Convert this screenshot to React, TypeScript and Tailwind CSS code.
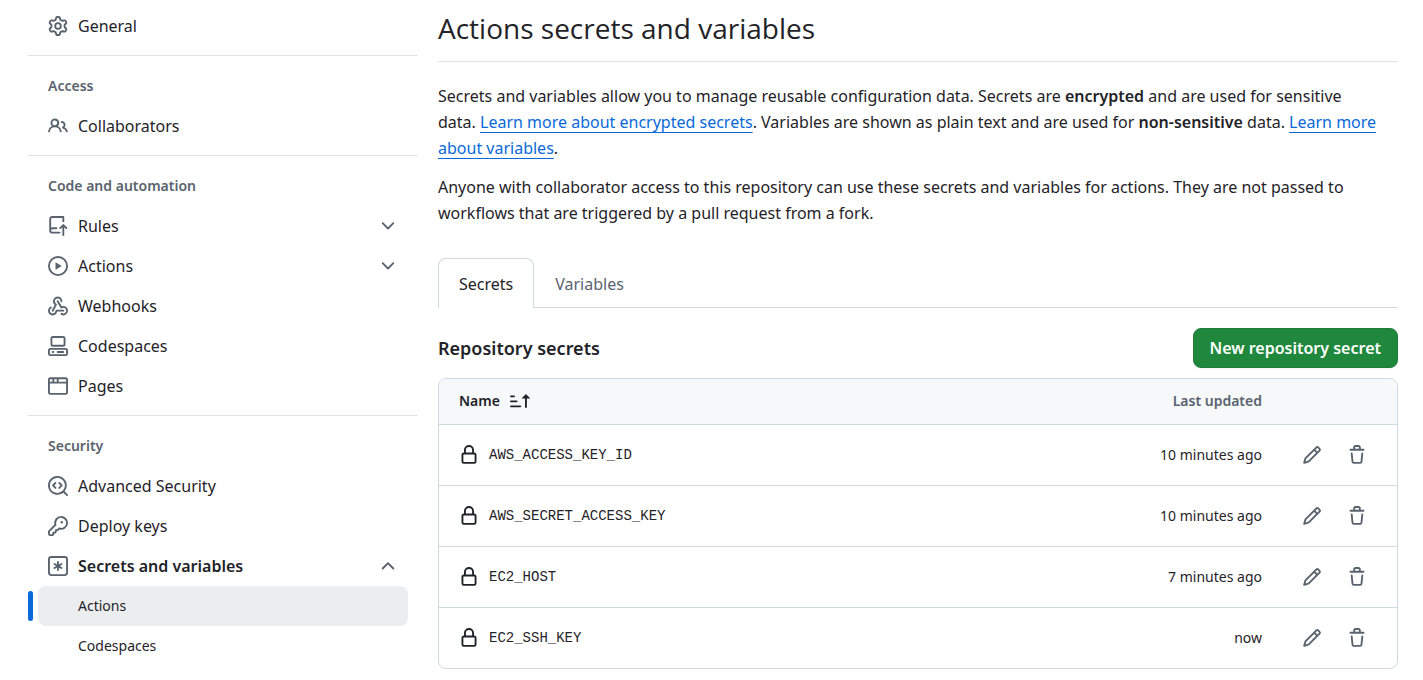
import React from "react";

const icons = {
  gear: [
    "M8 0a8.2 8.2 0 0 1 .701.031C9.444.095 9.99.645 10.16 1.29l.288 1.107c.018.066.079.158.212.224.231.114.454.243.668.386.123.082.233.09.299.071l1.103-.303c.644-.176 1.392.021 1.82.63.27.385.506.792.704 1.218.315.675.111 1.422-.364 1.891l-.814.806c-.049.048-.098.147-.088.294.016.257.016.515 0 .772-.01.147.038.246.088.294l.814.806c.475.469.679 1.216.364 1.891a7.977 7.977 0 0 1-.704 1.217c-.428.61-1.176.807-1.82.63l-1.102-.302c-.067-.019-.177-.011-.3.071a5.909 5.909 0 0 1-.668.386c-.133.066-.194.158-.211.224l-.29 1.106c-.168.646-.715 1.196-1.458 1.26a8.006 8.006 0 0 1-1.402 0c-.743-.064-1.289-.614-1.458-1.26l-.289-1.106c-.018-.066-.079-.158-.212-.224a5.738 5.738 0 0 1-.668-.386c-.123-.082-.233-.09-.299-.071l-1.103.303c-.644.176-1.392-.021-1.82-.63a8.12 8.12 0 0 1-.704-1.218c-.315-.675-.111-1.422.363-1.891l.815-.806c.05-.048.098-.147.088-.294a6.214 6.214 0 0 1 0-.772c.01-.147-.038-.246-.088-.294l-.815-.806C.635 6.045.431 5.298.746 4.623a7.92 7.92 0 0 1 .704-1.217c.428-.61 1.176-.807 1.82-.63l1.102.302c.067.019.177.011.3-.071.214-.143.437-.272.668-.386.133-.066.194-.158.211-.224l.29-1.106C6.009.645 6.556.095 7.299.03 7.53.01 7.764 0 8 0Zm-.571 1.525c-.036.003-.108.036-.137.146l-.289 1.105c-.147.561-.549.967-.998 1.189-.173.086-.34.183-.5.29-.417.278-.97.423-1.529.27l-1.103-.303c-.109-.03-.175.016-.195.045-.22.312-.412.644-.573.99-.014.031-.021.11.059.19l.815.806c.411.406.562.957.53 1.456a4.709 4.709 0 0 0 0 .582c.032.499-.119 1.05-.53 1.456l-.815.806c-.081.08-.073.159-.059.19.162.346.353.677.573.989.02.03.085.076.195.046l1.102-.303c.56-.153 1.113-.008 1.53.27.161.107.328.204.501.29.447.222.85.629.997 1.189l.289 1.105c.029.109.101.143.137.146a6.6 6.6 0 0 0 1.142 0c.036-.003.108-.036.137-.146l.289-1.105c.147-.561.549-.967.998-1.189.173-.086.34-.183.5-.29.417-.278.97-.423 1.529-.27l1.103.303c.109.029.175-.016.195-.045.22-.313.411-.644.573-.99.014-.031.021-.11-.059-.19l-.815-.806c-.411-.406-.562-.957-.53-1.456a4.709 4.709 0 0 0 0-.582c-.032-.499.119-1.05.53-1.456l.815-.806c.081-.08.073-.159.059-.19a6.464 6.464 0 0 0-.573-.989c-.02-.03-.085-.076-.195-.046l-1.102.303c-.56.153-1.113.008-1.53-.27a4.44 4.44 0 0 0-.501-.29c-.447-.222-.85-.629-.997-1.189l-.289-1.105c-.029-.11-.101-.143-.137-.146a6.6 6.6 0 0 0-1.142 0ZM11 8a3 3 0 1 1-6 0 3 3 0 0 1 6 0ZM9.5 8a1.5 1.5 0 1 0-3.001.001A1.5 1.5 0 0 0 9.5 8Z",
  ],
  people: [
    "M2 5.5a3.5 3.5 0 1 1 5.898 2.549 5.508 5.508 0 0 1 3.034 4.084.75.75 0 1 1-1.482.235 4 4 0 0 0-7.9 0 .75.75 0 0 1-1.482-.236A5.507 5.507 0 0 1 3.102 8.05 3.493 3.493 0 0 1 2 5.5ZM11 4a3.001 3.001 0 0 1 2.22 5.018 5.01 5.01 0 0 1 2.56 3.012.749.749 0 0 1-.885.954.752.752 0 0 1-.549-.514 3.507 3.507 0 0 0-2.522-2.372.75.75 0 0 1-.574-.73v-.352a.75.75 0 0 1 .416-.672A1.5 1.5 0 0 0 11 5.5.75.75 0 0 1 11 4Zm-5.5-.5a2 2 0 1 0-.001 3.999A2 2 0 0 0 5.5 3.5Z",
  ],
  repoPush: [
    "M1 2.5A2.5 2.5 0 0 1 3.5 0h8.75a.75.75 0 0 1 .75.75v3.5a.75.75 0 0 1-1.5 0V1.5h-8a1 1 0 0 0-1 1v6.708A2.493 2.493 0 0 1 3.5 9h3.25a.75.75 0 0 1 0 1.5H3.5a1 1 0 0 0 0 2h5.75a.75.75 0 0 1 0 1.5H3.5A2.5 2.5 0 0 1 1 11.5Zm13.23 7.79h-.001l-1.224-1.224v6.184a.75.75 0 0 1-1.5 0V9.066L10.28 10.29a.75.75 0 0 1-1.06-1.061l2.505-2.504a.75.75 0 0 1 1.06 0L15.29 9.23a.751.751 0 0 1-.018 1.042.751.751 0 0 1-1.042.018Z",
  ],
  play: [
    "M8 0a8 8 0 1 1 0 16A8 8 0 0 1 8 0ZM1.5 8a6.5 6.5 0 1 0 13 0 6.5 6.5 0 0 0-13 0Zm4.879-2.773 4.264 2.559a.25.25 0 0 1 0 .428l-4.264 2.559A.25.25 0 0 1 6 10.559V5.442a.25.25 0 0 1 .379-.215Z",
  ],
  webhook: [
    "M5.5 4.25a2.25 2.25 0 0 1 4.5 0 .75.75 0 0 0 1.5 0 3.75 3.75 0 1 0-6.14 2.889l-2.272 4.258a.75.75 0 0 0 1.324.706L7 7.25a.75.75 0 0 0-.309-1.015A2.25 2.25 0 0 1 5.5 4.25Z",
    "M7.364 3.607a.75.75 0 0 1 1.03.257l2.608 4.349a3.75 3.75 0 1 1-.628 6.785.75.75 0 0 1 .752-1.299 2.25 2.25 0 1 0-.033-3.88.75.75 0 0 1-1.03-.256L7.107 4.636a.75.75 0 0 1 .257-1.03Z",
    "M2.9 8.776A.75.75 0 0 1 2.625 9.8 2.25 2.25 0 1 0 6 11.75a.75.75 0 0 1 .75-.751h5.5a.75.75 0 0 1 0 1.5H7.425a3.751 3.751 0 1 1-5.55-3.998.75.75 0 0 1 1.024.274Z",
  ],
  codespaces: [
    "M0 11.25c0-.966.784-1.75 1.75-1.75h12.5c.966 0 1.75.784 1.75 1.75v3A1.75 1.75 0 0 1 14.25 16H1.75A1.75 1.75 0 0 1 0 14.25Zm2-9.5C2 .784 2.784 0 3.75 0h8.5C13.216 0 14 .784 14 1.75v5a1.75 1.75 0 0 1-1.75 1.75h-8.5A1.75 1.75 0 0 1 2 6.75Zm1.75-.25a.25.25 0 0 0-.25.25v5c0 .138.112.25.25.25h8.5a.25.25 0 0 0 .25-.25v-5a.25.25 0 0 0-.25-.25Zm-2 9.5a.25.25 0 0 0-.25.25v3c0 .138.112.25.25.25h12.5a.25.25 0 0 0 .25-.25v-3a.25.25 0 0 0-.25-.25Z",
    "M7 12.75a.75.75 0 0 1 .75-.75h4.5a.75.75 0 0 1 0 1.5h-4.5a.75.75 0 0 1-.75-.75Zm-4 0a.75.75 0 0 1 .75-.75h.5a.75.75 0 0 1 0 1.5h-.5a.75.75 0 0 1-.75-.75Z",
  ],
  browser: [
    "M0 2.75C0 1.784.784 1 1.75 1h12.5c.966 0 1.75.784 1.75 1.75v10.5A1.75 1.75 0 0 1 14.25 15H1.75A1.75 1.75 0 0 1 0 13.25ZM14.5 6h-13v7.25c0 .138.112.25.25.25h12.5a.25.25 0 0 0 .25-.25Zm-6-3.5v2h6V2.75a.25.25 0 0 0-.25-.25ZM5 2.5v2h2v-2Zm-3.25 0a.25.25 0 0 0-.25.25V4.5h2v-2Z",
  ],
  codescan: [
    "M8.47 4.97a.75.75 0 0 0 0 1.06L9.94 7.5 8.47 8.97a.75.75 0 1 0 1.06 1.06l2-2a.75.75 0 0 0 0-1.06l-2-2a.75.75 0 0 0-1.06 0ZM6.53 6.03a.75.75 0 0 0-1.06-1.06l-2 2a.75.75 0 0 0 0 1.06l2 2a.75.75 0 1 0 1.06-1.06L5.06 7.5l1.47-1.47Z",
    "M12.246 13.307a7.501 7.501 0 1 1 1.06-1.06l2.474 2.473a.749.749 0 1 1-1.06 1.06l-2.474-2.473ZM1.5 7.5a6.002 6.002 0 0 0 3.608 5.504 6.002 6.002 0 0 0 6.486-1.117.748.748 0 0 1 .292-.293A6 6 0 1 0 1.5 7.5Z",
  ],
  key: [
    "M10.5 0a5.499 5.499 0 1 1-1.288 10.848l-.932.932a.749.749 0 0 1-.53.22H7v.75a.749.749 0 0 1-.22.53l-.5.5a.749.749 0 0 1-.53.22H5v.75a.749.749 0 0 1-.22.53l-.5.5a.749.749 0 0 1-.53.22h-2A1.75 1.75 0 0 1 0 14.25v-2c0-.199.079-.389.22-.53l4.932-4.932A5.5 5.5 0 0 1 10.5 0Zm-4 5.5c-.001.431.069.86.205 1.269a.75.75 0 0 1-.181.768L1.5 12.56v1.69c0 .138.112.25.25.25h1.69l.06-.06v-1.19a.75.75 0 0 1 .75-.75h1.19l.06-.06v-1.19a.75.75 0 0 1 .75-.75h1.19l1.023-1.025a.75.75 0 0 1 .768-.18A4 4 0 1 0 6.5 5.5ZM11 6a1 1 0 1 1 0-2 1 1 0 0 1 0 2Z",
  ],
  asterisk: [
    "M0 2.75A2.75 2.75 0 0 1 2.75 0h10.5A2.75 2.75 0 0 1 16 2.75v10.5A2.75 2.75 0 0 1 13.25 16H2.75A2.75 2.75 0 0 1 0 13.25ZM2.75 1.5c-.69 0-1.25.56-1.25 1.25v10.5c0 .69.56 1.25 1.25 1.25h10.5c.69 0 1.25-.56 1.25-1.25V2.75c0-.69-.56-1.25-1.25-1.25Z",
    "M8 4a.75.75 0 0 1 .75.75V6.7l1.69-.975a.75.75 0 0 1 .75 1.3L9.5 8l1.69.976a.75.75 0 0 1-.75 1.298L8.75 9.3v1.951a.75.75 0 0 1-1.5 0V9.299l-1.69.976a.75.75 0 0 1-.75-1.3L6.5 8l-1.69-.975a.75.75 0 0 1 .75-1.3l1.69.976V4.75A.75.75 0 0 1 8 4Z",
  ],
  chevronDown: [
    "M12.78 5.22a.749.749 0 0 1 0 1.06l-4.25 4.25a.749.749 0 0 1-1.06 0L3.22 6.28a.749.749 0 1 1 1.06-1.06L8 8.939l3.72-3.719a.749.749 0 0 1 1.06 0Z",
  ],
  chevronUp: [
    "M3.22 10.53a.749.749 0 0 1 0-1.06l4.25-4.25a.749.749 0 0 1 1.06 0l4.25 4.25a.749.749 0 1 1-1.06 1.06L8 6.811 4.28 10.53a.749.749 0 0 1-1.06 0Z",
  ],
  sortAsc: [
    "m12.927 2.573 3 3A.25.25 0 0 1 15.75 6H13.5v6.75a.75.75 0 0 1-1.5 0V6H9.75a.25.25 0 0 1-.177-.427l3-3a.25.25 0 0 1 .354 0ZM0 12.25a.75.75 0 0 1 .75-.75h7.5a.75.75 0 0 1 0 1.5H.75a.75.75 0 0 1-.75-.75Zm0-4a.75.75 0 0 1 .75-.75h4.5a.75.75 0 0 1 0 1.5H.75A.75.75 0 0 1 0 8.25Zm0-4a.75.75 0 0 1 .75-.75h2.5a.75.75 0 0 1 0 1.5H.75A.75.75 0 0 1 0 4.25Z",
  ],
  lock: [
    "M4 4a4 4 0 0 1 8 0v2h.25c.966 0 1.75.784 1.75 1.75v5.5A1.75 1.75 0 0 1 12.25 15h-8.5A1.75 1.75 0 0 1 2 13.25v-5.5C2 6.784 2.784 6 3.75 6H4Zm8.25 3.5h-8.5a.25.25 0 0 0-.25.25v5.5c0 .138.112.25.25.25h8.5a.25.25 0 0 0 .25-.25v-5.5a.25.25 0 0 0-.25-.25ZM10.5 6V4a2.5 2.5 0 1 0-5 0v2Z",
  ],
  pencil: [
    "M11.013 1.427a1.75 1.75 0 0 1 2.474 0l1.086 1.086a1.75 1.75 0 0 1 0 2.474l-8.61 8.61c-.21.21-.47.364-.756.445l-3.251.93a.75.75 0 0 1-.927-.928l.929-3.25c.081-.286.235-.547.445-.758l8.61-8.61Zm.176 4.823L9.75 4.81l-6.286 6.287a.253.253 0 0 0-.064.108l-.558 1.953 1.953-.558a.253.253 0 0 0 .108-.064Zm1.238-3.763a.25.25 0 0 0-.354 0L10.811 3.75l1.439 1.44 1.263-1.263a.25.25 0 0 0 0-.354Z",
  ],
  trash: [
    "M11 1.75V3h2.25a.75.75 0 0 1 0 1.5H2.75a.75.75 0 0 1 0-1.5H5V1.75C5 .784 5.784 0 6.75 0h2.5C10.216 0 11 .784 11 1.75ZM4.496 6.675l.66 6.6a.25.25 0 0 0 .249.225h5.19a.25.25 0 0 0 .249-.225l.66-6.6a.75.75 0 0 1 1.492.149l-.66 6.6A1.748 1.748 0 0 1 10.595 15h-5.19a1.75 1.75 0 0 1-1.741-1.575l-.66-6.6a.75.75 0 1 1 1.492-.15ZM6.5 1.75V3h3V1.75a.25.25 0 0 0-.25-.25h-2.5a.25.25 0 0 0-.25.25Z",
  ],
};

type IconName = keyof typeof icons;

function Icon({ name, className = "" }: { name: IconName; className?: string }) {
  return (
    <svg viewBox="0 0 16 16" fill="currentColor" aria-hidden="true" className={`size-5 shrink-0 ${className}`}>
      {icons[name].map((d) => (
        <path key={d} d={d} />
      ))}
    </svg>
  );
}

type Item = { label: string; icon: IconName; toggle?: "open" | "closed" };

const sections: { title?: string; items: Item[] }[] = [
  { items: [{ label: "General", icon: "gear" }] },
  { title: "Access", items: [{ label: "Collaborators", icon: "people" }] },
  {
    title: "Code and automation",
    items: [
      { label: "Rules", icon: "repoPush", toggle: "closed" },
      { label: "Actions", icon: "play", toggle: "closed" },
      { label: "Webhooks", icon: "webhook" },
      { label: "Codespaces", icon: "codespaces" },
      { label: "Pages", icon: "browser" },
    ],
  },
  {
    title: "Security",
    items: [
      { label: "Advanced Security", icon: "codescan" },
      { label: "Deploy keys", icon: "key" },
      { label: "Secrets and variables", icon: "asterisk", toggle: "open" },
    ],
  },
];

const secrets = [
  { name: "AWS_ACCESS_KEY_ID", updated: "10 minutes ago" },
  { name: "AWS_SECRET_ACCESS_KEY", updated: "10 minutes ago" },
  { name: "EC2_HOST", updated: "7 minutes ago" },
  { name: "EC2_SSH_KEY", updated: "now" },
];

function NavItem({ item }: { item: Item }) {
  const row = "flex h-10 w-full items-center gap-2.5 rounded-md px-2.5 text-left";
  const content = (
    <>
      <Icon name={item.icon} className="text-[#59636e]" />
      <span className={item.toggle === "open" ? "grow font-semibold" : "grow"}>{item.label}</span>
    </>
  );
  if (!item.toggle) {
    return (
      <a href="#" className={row}>
        {content}
      </a>
    );
  }
  return (
    <button type="button" aria-expanded={item.toggle === "open"} className={row}>
      {content}
      <Icon name={item.toggle === "open" ? "chevronUp" : "chevronDown"} className="text-[#59636e]" />
    </button>
  );
}

function Sidebar() {
  return (
    <nav aria-label="Settings" className="w-[390px] shrink-0 pt-1.5">
      {sections.map((section, i) => (
        <section key={i} className={i > 0 ? "mt-[9px] border-t border-[#dfe2e6] px-2.5 pt-2.5" : "px-2.5"}>
          {section.title && (
            <h3 className="flex h-10 items-center px-2.5 text-sm font-semibold text-[#59636e]">{section.title}</h3>
          )}
          <ul>
            {section.items.map((item) => (
              <li key={item.label}>
                <NavItem item={item} />
                {item.toggle === "open" && (
                  <ul className="text-sm">
                    <li className="relative">
                      <span className="absolute top-[5px] -left-2.5 h-[30px] w-[5px] rounded-md bg-[#0969da]" />
                      <a href="#" aria-current="page" className="flex h-10 items-center rounded-lg bg-[#ecedef] pl-10">
                        Actions
                      </a>
                    </li>
                    <li>
                      <a href="#" className="flex h-10 items-center rounded-lg pl-10">
                        Codespaces
                      </a>
                    </li>
                  </ul>
                )}
              </li>
            ))}
          </ul>
        </section>
      ))}
    </nav>
  );
}

function TextLink({ children }: { children: React.ReactNode }) {
  return (
    <a href="#" className="text-[#0969da] underline decoration-1 underline-offset-4">
      {children}
    </a>
  );
}

export default function App() {
  return (
    <div className="flex gap-5 bg-white pr-[25px] pl-7 font-['Noto_Sans','Open_Sans',sans-serif] text-base text-[#1f2328]">
      <Sidebar />
      <main className="min-w-0 grow">
        <h1 className="border-b border-[#dfe2e6] pt-2 pb-[13px] font-['Open_Sans','Noto_Sans',sans-serif] text-[28px] leading-10">
          Actions secrets and variables
        </h1>
        <div className="mt-[21px] flex flex-col gap-[13px] pr-5 leading-[26px]">
          <p>
            Secrets and variables allow you to manage reusable configuration data. Secrets are{" "}
            <strong className="font-semibold">encrypted</strong> and are used for sensitive data.{" "}
            <TextLink>Learn more about encrypted secrets</TextLink>. Variables are shown as plain text and are used for{" "}
            <strong className="font-semibold">non-sensitive</strong> data. <TextLink>Learn more about variables</TextLink>.
          </p>
          <p>
            Anyone with collaborator access to this repository can use these secrets and variables for actions. They are
            not passed to workflows that are triggered by a pull request from a fork.
          </p>
        </div>

        <div role="tablist" className="mt-8 flex border-b border-[#d1d9e0]">
          <button
            type="button"
            role="tab"
            aria-selected="true"
            className="-mb-px h-[50px] rounded-t-lg border border-b-0 border-[#d1d9e0] bg-white px-5"
          >
            Secrets
          </button>
          <button
            type="button"
            role="tab"
            aria-selected="false"
            className="-mb-px h-[50px] border border-b-0 border-transparent px-5 text-[#59636e]"
          >
            Variables
          </button>
        </div>

        <div className="mt-5 flex items-center justify-between">
          <h2 className="text-lg font-semibold">Repository secrets</h2>
          <button
            type="button"
            className="h-10 rounded-lg border border-[#1f7d39] bg-[#1f883d] px-4 font-semibold text-white shadow-xs"
          >
            New repository secret
          </button>
        </div>

        <div className="mt-2.5 overflow-hidden rounded-lg border border-[#d1d9e0]">
          <table className="w-full text-sm">
            <thead className="bg-[#f6f8fa]">
              <tr className="h-[45px] border-b border-[#d1d9e0]">
                <th scope="col" className="pl-5 text-left font-semibold">
                  <button type="button" className="flex items-center gap-2.5">
                    Name
                    <Icon name="sortAsc" />
                  </button>
                </th>
                <th scope="col" className="text-right font-semibold text-[#59636e]">
                  Last updated
                </th>
                <th scope="col" aria-label="Manage" className="w-[135px]" />
              </tr>
            </thead>
            <tbody>
              {secrets.map((secret) => (
                <tr key={secret.name} className="h-[61px] border-b border-[#d1d9e0] last:border-b-0">
                  <td className="pl-5">
                    <div className="flex items-center gap-2.5">
                      <Icon name="lock" />
                      <span className="font-['Liberation_Mono',monospace]">{secret.name}</span>
                    </div>
                  </td>
                  <td className="text-right">{secret.updated}</td>
                  <td>
                    <div className="flex justify-end gap-[5px] pr-5 text-[#59636e]">
                      <button type="button" aria-label={`Edit ${secret.name}`} className="flex size-10 items-center justify-center">
                        <Icon name="pencil" />
                      </button>
                      <button type="button" aria-label={`Delete ${secret.name}`} className="flex size-10 items-center justify-center">
                        <Icon name="trash" />
                      </button>
                    </div>
                  </td>
                </tr>
              ))}
            </tbody>
          </table>
        </div>
      </main>
    </div>
  );
}
